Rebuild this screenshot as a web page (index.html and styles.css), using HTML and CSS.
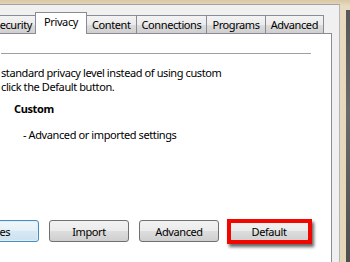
FILE: index.html
```html
<!DOCTYPE html>
<html lang="en">
<head>
    <meta charset="UTF-8">
    <title>Internet Options - Privacy</title>
    <link rel="stylesheet" href="styles.css">
</head>
<body>
    <div class="frame">
        <div class="dialog">
            <div class="tabs">
                <div class="tab">Security</div>
                <div class="tab active">Privacy</div>
                <div class="tab">Content</div>
                <div class="tab">Connections</div>
                <div class="tab">Programs</div>
                <div class="tab">Advanced</div>
            </div>
            <div class="panel">
                <div class="separator"></div>
                <p class="desc">standard privacy level instead of using custom<br>click the Default button.</p>
                <p class="level">Custom</p>
                <p class="level-note">- Advanced or imported settings</p>
                <div class="buttons">
                    <button class="btn focused">Sites</button>
                    <button class="btn">Import</button>
                    <button class="btn">Advanced</button>
                    <div class="highlight">
                        <button class="btn">Default</button>
                    </div>
                </div>
            </div>
        </div>
        <div class="edge"></div>
        <div class="dark"></div>
    </div>
</body>
</html>
```

FILE: styles.css
```css
body {
    margin: 0;
    width: 350px;
    height: 262px;
    overflow: hidden;
    background: linear-gradient(#d9c7a5, #e8dbc2 6px, #e6d6b9);
    font-family: 'Noto Sans', sans-serif;
    font-size: 11px;
    letter-spacing: -0.4px;
    color: #000;
}
.frame {
    display: flex;
    height: 262px;
}
.dialog {
    width: 340px;
    margin-top: 4px;
    background-color: #f0f0f0;
    border-top: 1px solid #a3a3a3;
    border-right: 1px solid #b5b5b5;
    overflow: hidden;
}
.edge {
    width: 6px;
}
.dark {
    width: 4px;
    margin-top: 10px;
    background: linear-gradient(#575757, #6b6b6b 40%, #4f4f4f);
}
/* Onglets */
.tabs {
    display: flex;
    align-items: flex-end;
    margin-top: 7px;
    margin-left: -12px;
    height: 21px;
}
.tab {
    height: 18px;
    line-height: 17px;
    padding: 0 5px;
    box-sizing: border-box;
    border: 1px solid #898c95;
    border-bottom: none;
    margin-right: -1px;
    background: linear-gradient(#f3f3f3, #ebebeb 50%, #dddddd 51%, #cfcfcf);
    white-space: nowrap;
}
.tab.active {
    position: relative;
    z-index: 1;
    height: 22px;
    margin: 0 -1px -1px -2px;
    padding: 0 8px;
    line-height: 18px;
    background: #fff;
}
.panel {
    margin-left: -10px;
    width: 342px;
    height: 240px;
    box-sizing: border-box;
    border: 1px solid #898c95;
    background-color: #fff;
    padding-left: 10px;
}
.separator {
    margin-top: 19px;
    margin-right: 20px;
    border-top: 1px solid #a0a0a0;
}
.desc {
    margin: 12px 0 0 0;
    line-height: 14px;
}
.level {
    margin: 8px 0 0 13px;
    font-weight: 700;
    line-height: 13px;
}
.level-note {
    margin: 13px 0 0 22px;
    line-height: 13px;
}
.buttons {
    display: flex;
    align-items: center;
    gap: 10px;
    margin-top: 79px;
    margin-left: -42px;
}
.btn {
    width: 80px;
    height: 22px;
    padding: 0;
    border: 1px solid #707070;
    border-radius: 3px;
    background: linear-gradient(#f2f2f2, #ebebeb 50%, #dddddd 51%, #cfcfcf);
    font-family: 'Noto Sans', sans-serif;
    font-size: 11px;
    letter-spacing: -0.4px;
    color: #000;
    flex-shrink: 0;
}
.btn.focused {
    border-color: #4d8bbd;
    background: linear-gradient(#f0f7fb, #e4f0f7 50%, #d6e8f3 51%, #cde2ef);
    box-shadow: inset 0 0 0 1px #d8f0fd;
}
.highlight {
    position: relative;
}
.highlight::after {
    content: "";
    position: absolute;
    left: -2px;
    top: -1px;
    right: -3px;
    bottom: -2px;
    border: 4px solid #f00800;
    box-shadow: 2px 3px 3px rgba(0, 0, 0, 0.6);
}
.highlight .btn {
    display: block;
}
```
